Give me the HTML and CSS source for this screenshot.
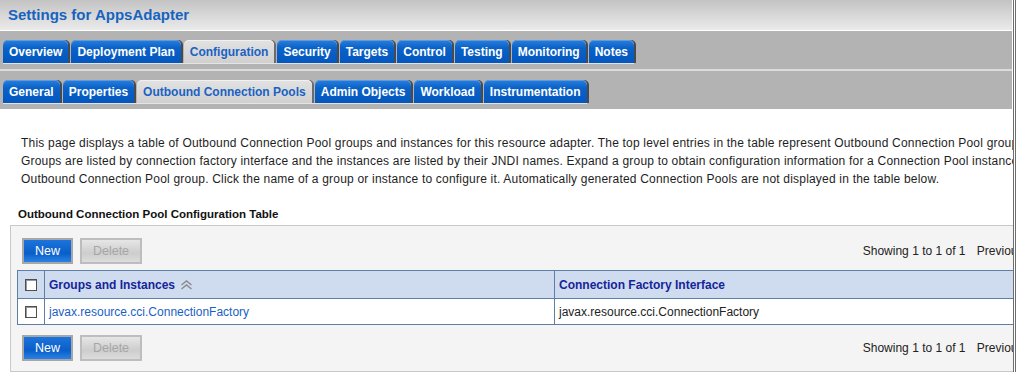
FILE: index.html
```html
<!DOCTYPE html>
<html lang="en">
<head>
  <meta charset="UTF-8" />
  <title>Settings for AppsAdapter</title>
  <link rel="stylesheet" href="styles.css">
</head>
<body>
<div class="page">

<!-- title -->
  <div class="title-bar">
    <h1 class="title">Settings for AppsAdapter</h1>
  </div>

<!-- tabs -->
  <div class="tab-row">
    <div class="tabs">
      <a class="tab">Overview</a>
      <a class="tab">Deployment Plan</a>
      <a class="tab active">Configuration</a>
      <a class="tab">Security</a>
      <a class="tab">Targets</a>
      <a class="tab">Control</a>
      <a class="tab">Testing</a>
      <a class="tab">Monitoring</a>
      <a class="tab">Notes</a>
    </div>
  </div>
  <div class="tab-row sub">
    <div class="tabs">
      <a class="tab">General</a>
      <a class="tab">Properties</a>
      <a class="tab active">Outbound Connection Pools</a>
      <a class="tab">Admin Objects</a>
      <a class="tab">Workload</a>
      <a class="tab">Instrumentation</a>
    </div>
  </div>

<!-- content -->
  <div class="content">
    <p class="intro">
      This page displays a table of Outbound Connection Pool groups and instances for this resource adapter. The top level entries in the table represent Outbound Connection Pool groups.<br>
      Groups are listed by connection factory interface and the instances are listed by their JNDI names. Expand a group to obtain configuration information for a Connection Pool instance within an<br>
      Outbound Connection Pool group. Click the name of a group or instance to configure it. Automatically generated Connection Pools are not displayed in the table below.
    </p>

    <h2 class="table-title">Outbound Connection Pool Configuration Table</h2>

    <div class="table-box">
      <div class="toolbar">
        <div class="buttons">
          <button class="btn primary">New</button>
          <button class="btn disabled">Delete</button>
        </div>
        <div class="pager">Showing 1 to 1 of 1 <span class="pager-links">Previous | Next</span></div>
      </div>

      <table class="data">
        <thead>
          <tr>
            <th class="check"><span class="checkbox"></span></th>
            <th class="col-group">Groups and Instances
              <svg class="sort" width="13" height="10" viewBox="0 0 13 10">
                <polyline points="1.5,5 6.5,1 11.5,5" fill="none" stroke="#8a8a8a" stroke-width="1.4"/>
                <polyline points="1.5,9 6.5,5 11.5,9" fill="none" stroke="#8a8a8a" stroke-width="1.4"/>
              </svg>
            </th>
            <th>Connection Factory Interface</th>
          </tr>
        </thead>
        <tbody>
          <tr>
            <td class="check"><span class="checkbox"></span></td>
            <td><a class="link">javax.resource.cci.ConnectionFactory</a></td>
            <td>javax.resource.cci.ConnectionFactory</td>
          </tr>
        </tbody>
      </table>

      <div class="toolbar">
        <div class="buttons">
          <button class="btn primary">New</button>
          <button class="btn disabled">Delete</button>
        </div>
        <div class="pager">Showing 1 to 1 of 1 <span class="pager-links">Previous | Next</span></div>
      </div>
    </div>
  </div>

</div>
</body>
</html>
```

FILE: styles.css
```css
* {
  margin: 0;
  padding: 0;
  box-sizing: border-box;
}

body {
  font-family: "Liberation Sans", Arial, sans-serif;
  font-size: 12px;
  color: #222;
  background: #fff;
  overflow: hidden;
}

.page {
  width: 1016px;
  height: 372px;
  overflow: hidden;
  border-right: 3px double #6e6e6e;
  padding-right: 1px;
}

/* title */
.title-bar {
  height: 31px;
  background: linear-gradient(#c3c3c3, #ebebeb);
  border-bottom: 1px solid #fff;
  padding: 6px 0 0 8px;
}

.title {
  font-size: 15px;
  font-weight: bold;
  color: #1763c0;
  line-height: 18px;
}

/* tabs */
.tab-row {
  background: #b3b3b3;
  padding: 9px 0 5px 3px;
  border-bottom: 2px solid #dcdcdc;
}

.tab-row.sub {
  border-bottom: none;
  padding-bottom: 5px;
}

.tabs {
  display: inline-flex;
  gap: 3px;
  border-bottom: 1px solid #e4e4e4;
}

.tab {
  display: block;
  height: 23px;
  line-height: 24px;
  padding: 0 6px;
  font-weight: bold;
  font-size: 12px;
  color: #fff;
  background: linear-gradient(#2a7fdc, #0a62c8 35%, #0356bd);
  border-radius: 5px 5px 0 0;
  box-shadow: 2px 0 0 #4a4a4a, inset 0 1px 0 #5c9be3;
}

.tab.active {
  color: #1a62c2;
  background: linear-gradient(#e2e2e2, #d0d0d0);
  box-shadow: 2px 0 0 #6c6c6c, inset 0 1px 0 #f0f0f0;
}

/* content */
.content {
  padding-top: 25px;
}

.intro {
  padding-left: 21px;
  line-height: 18px;
  white-space: nowrap;
  letter-spacing: 0.2px;
  color: #1e1e1e;
}

.table-title {
  font-size: 11.5px;
  font-weight: bold;
  color: #111;
  margin: 19px 0 0 18px;
  line-height: 14px;
}

.table-box {
  width: 1060px;
  margin: 4px 0 0 10px;
  background: #f4f4f4;
  border: 1px solid #c9c9c9;
  padding: 12px 6px 10px 6px;
}

.toolbar {
  display: flex;
  justify-content: space-between;
  align-items: center;
  padding: 0 5px;
}

.table-box .toolbar + .data {
  margin-top: 6px;
}

.data + .toolbar {
  margin-top: 10px;
}

.buttons {
  display: flex;
  gap: 7px;
}

.btn {
  font-family: "Liberation Sans", Arial, sans-serif;
  font-size: 12.5px;
  height: 26px;
  border: 2px solid #a7a7a7;
  cursor: pointer;
}

.btn.primary {
  width: 51px;
  color: #fff;
  background: linear-gradient(#1d74dc, #0a5ec8 60%, #2a82e4);
}

.btn.disabled {
  width: 62px;
  color: #a6a6a6;
  background: linear-gradient(#e6e6e6, #cdcdcd 60%, #dcdcdc);
  border-color: #bdbdbd;
}

.pager {
  color: #222;
  white-space: nowrap;
}

.pager-links {
  margin-left: 8px;
}

/* table */
.data {
  width: 100%;
  border-collapse: collapse;
  border: 1px solid #5f7ea6;
}

.data th,
.data td {
  border: 1px solid #5f7ea6;
  text-align: left;
  padding: 0 4px;
  white-space: nowrap;
}

.data th {
  height: 28px;
  background: #cfdcef;
  color: #15259a;
  font-weight: bold;
}

.data td {
  height: 26px;
  background: #fff;
}

.data .check {
  width: 27px;
  text-align: center;
  padding: 0;
}

.data .col-group {
  width: 510px;
}

.checkbox {
  display: inline-block;
  width: 12px;
  height: 12px;
  background: #fff;
  border: 1px solid #4f4f4f;
  box-shadow: inset 1px 1px 0 #999;
  vertical-align: middle;
}

.sort {
  vertical-align: -1px;
  margin-left: 2px;
}

.link {
  color: #1b5fc4;
}
```
